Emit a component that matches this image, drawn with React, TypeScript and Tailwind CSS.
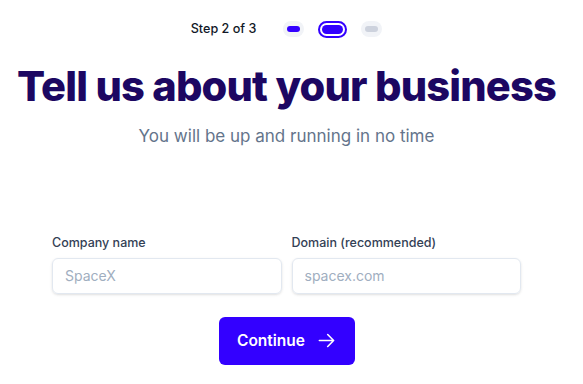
function StepDot({ state }: { state: 'done' | 'current' | 'todo' }) {
  if (state === 'current') {
    return (
      <div className="flex h-[17px] w-[29px] items-center justify-center rounded-full border-2 border-[#3300ff] bg-white">
        <div className="h-[9px] w-[21px] rounded-full bg-[#3300ff]" />
      </div>
    );
  }
  return (
    <div className="flex h-4 w-[21px] items-center justify-center rounded-full bg-[#f1f3f7]">
      <div
        className={
          state === 'done'
            ? 'h-[6px] w-[13px] rounded-full bg-[#3300ff]'
            : 'h-[6px] w-[13px] rounded-full bg-[#cdd2dd]'
        }
      />
    </div>
  );
}

export default function App() {
  return (
    <div
      className="flex min-h-[384px] w-[573px] flex-col items-center bg-white"
      style={{ fontFamily: 'Inter, "Noto Sans", sans-serif' }}
    >
      {/* Stepper */}
      <div className="mt-[20px] flex items-center">
        <span className="mr-[27px] text-[12.6px] font-medium text-[#111827]">Step 2 of 3</span>
        <div className="flex items-center gap-[14px]">
          <StepDot state="done" />
          <StepDot state="current" />
          <StepDot state="todo" />
        </div>
      </div>

      <h1 className="mt-[22px] text-[41.6px] leading-[50px] font-extrabold tracking-[-0.02em] text-[#1c0762]">
        Tell us about your business
      </h1>
      <p className="mt-[13px] text-[17px] leading-6 text-[#64748b]">
        You will be up and running in no time
      </p>

      <div className="mt-[86px] grid w-[469px] grid-cols-2 gap-[10px]">
        <div className="flex flex-col">
          <label className="mb-[5px] text-[12.5px] font-medium text-[#334155]">Company name</label>
          <input
            placeholder="SpaceX"
            className="h-9 rounded-md border border-[#e2e8f0] px-3 text-[14px] text-[#0f172a] shadow-sm outline-none placeholder:text-[#a0aec0]"
          />
        </div>
        <div className="flex flex-col">
          <label className="mb-[5px] text-[12.5px] font-medium text-[#334155]">Domain (recommended)</label>
          <input
            placeholder="spacex.com"
            className="h-9 rounded-md border border-[#e2e8f0] px-3 text-[14px] text-[#0f172a] shadow-sm outline-none placeholder:text-[#a0aec0]"
          />
        </div>
      </div>

      <button className="mt-[23px] flex h-12 w-[136px] items-center justify-center gap-[12px] rounded-md bg-[#3300ff] text-[15.5px] font-semibold text-white">
        Continue
        <svg
          viewBox="0 0 24 24"
          className="h-[19px] w-[19px]"
          fill="none"
          stroke="currentColor"
          strokeWidth={2}
          strokeLinecap="round"
          strokeLinejoin="round"
        >
          <path d="M13.5 4.5 21 12l-7.5 7.5M21 12H3" />
        </svg>
      </button>
    </div>
  );
}
